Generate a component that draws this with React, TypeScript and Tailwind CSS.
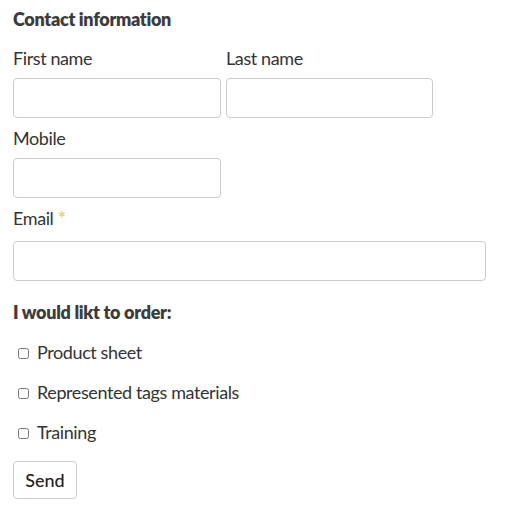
import React from "react";

const font = { fontFamily: "Lato, 'Open Sans', sans-serif" };

function Input({ w }: { w: string }) {
  return (
    <input
      type="text"
      className={`${w} h-[40px] rounded-[4px] border border-[#cccccc] bg-white outline-none`}
    />
  );
}

export default function App() {
  return (
    <div className="min-h-[508px] w-[527px] bg-white pl-[13px] text-[#333333]" style={font}>
      <div className="text-[18px] font-extrabold leading-[38px] tracking-[-0.3px] text-[#3c3c3c]">Contact information</div>
      <div className="flex gap-[5px]">
        <div className="flex flex-col">
          <label className="text-[18px] leading-[40px] tracking-[-0.4px]">First name</label>
          <Input w="w-[208px]" />
        </div>
        <div className="flex flex-col">
          <label className="text-[18px] leading-[40px] tracking-[-0.4px]">Last name</label>
          <Input w="w-[207px]" />
        </div>
      </div>
      <label className="block text-[18px] leading-[40px] tracking-[-0.4px]">Mobile</label>
      <Input w="w-[208px]" />
      <div className="flex h-[40px] items-center text-[18px] tracking-[-0.4px]">
        Email<span className="ml-[4px] text-[21px] leading-none text-[#f5cd3c]">*</span>
      </div>
      <div className="mt-[3px]">
        <Input w="w-[473px]" />
      </div>
      <div className="mt-[11px] text-[18px] font-extrabold leading-[40px] tracking-[-0.3px] text-[#3c3c3c]">I would likt to order:</div>
      {["Product sheet", "Represented tags materials", "Training"].map((t) => (
        <label key={t} className="flex h-[40px] items-center text-[18px] tracking-[-0.4px]">
          <input type="checkbox" className="ml-[5px] mr-[8px] mt-[3px] h-[11px] w-[11px]" />
          {t}
        </label>
      ))}
      <button className="mt-[9px] h-[38px] w-[64px] rounded-[4px] border border-[#cccccc] bg-white text-[18px] font-medium text-[#222222]">
        Send
      </button>
    </div>
  );
}
